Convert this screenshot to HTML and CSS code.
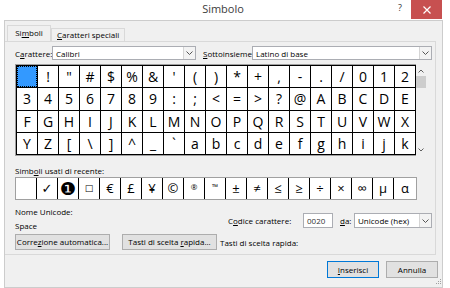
FILE: index.html
```html
<!DOCTYPE html>
<html lang="it">
  <head>
    <title>Simbolo</title>
    <meta name="viewport" content="width=device-width, initial-scale=1.0">
    <link rel="stylesheet" href="styles.css">
  </head>
  <body>
    <div class="titlebar">
      <div class="title">Simbolo</div>
      <div class="help">?</div>
      <div class="close">
        <svg width="8" height="8" viewBox="0 0 8 8"><path d="M0.5 0.5 L7.5 7.5 M7.5 0.5 L0.5 7.5" stroke="#fff" stroke-width="1.2"/></svg>
      </div>
    </div>
    <div class="client">
      <div class="tabs">
        <div class="tab active">Si<u>m</u>boli</div>
        <div class="tab"><u>C</u>aratteri speciali</div>
      </div>
      <div class="panel">
        <div class="font-row">
          <span class="lbl lbl-font">C<u>a</u>rattere:</span>
          <div class="select sel-font"><span>Calibri</span><span class="arrow"><svg width="7" height="4" viewBox="0 0 7 4"><path d="M0.5 0.5 L3.5 3.5 L6.5 0.5" fill="none" stroke="#555"/></svg></span></div>
          <span class="lbl lbl-sub"><u>S</u>ottoinsieme:</span>
          <div class="select sel-sub"><span>Latino di base</span><span class="arrow"><svg width="7" height="4" viewBox="0 0 7 4"><path d="M0.5 0.5 L3.5 3.5 L6.5 0.5" fill="none" stroke="#555"/></svg></span></div>
        </div>
        <div class="charbox">
          <div class="grid">
            <div class="cell sel"></div><div class="cell">!</div><div class="cell">"</div><div class="cell">#</div><div class="cell">$</div><div class="cell">%</div><div class="cell">&amp;</div><div class="cell">'</div><div class="cell">(</div><div class="cell">)</div><div class="cell">*</div><div class="cell">+</div><div class="cell">,</div><div class="cell">-</div><div class="cell">.</div><div class="cell">/</div><div class="cell">0</div><div class="cell">1</div><div class="cell">2</div>
            <div class="cell">3</div><div class="cell">4</div><div class="cell">5</div><div class="cell">6</div><div class="cell">7</div><div class="cell">8</div><div class="cell">9</div><div class="cell">:</div><div class="cell">;</div><div class="cell">&lt;</div><div class="cell">=</div><div class="cell">&gt;</div><div class="cell">?</div><div class="cell">@</div><div class="cell">A</div><div class="cell">B</div><div class="cell">C</div><div class="cell">D</div><div class="cell">E</div>
            <div class="cell">F</div><div class="cell">G</div><div class="cell">H</div><div class="cell">I</div><div class="cell">J</div><div class="cell">K</div><div class="cell">L</div><div class="cell">M</div><div class="cell">N</div><div class="cell">O</div><div class="cell">P</div><div class="cell">Q</div><div class="cell">R</div><div class="cell">S</div><div class="cell">T</div><div class="cell">U</div><div class="cell">V</div><div class="cell">W</div><div class="cell">X</div>
            <div class="cell">Y</div><div class="cell">Z</div><div class="cell">[</div><div class="cell">\</div><div class="cell">]</div><div class="cell">^</div><div class="cell">_</div><div class="cell">`</div><div class="cell">a</div><div class="cell">b</div><div class="cell">c</div><div class="cell">d</div><div class="cell">e</div><div class="cell">f</div><div class="cell">g</div><div class="cell">h</div><div class="cell">i</div><div class="cell">j</div><div class="cell">k</div>
          </div>
          <div class="scrollbar">
            <div class="sb-btn"><svg width="6" height="4" viewBox="0 0 6 4"><path d="M0.5 3.5 L3 1 L5.5 3.5" fill="none" stroke="#606060"/></svg></div>
            <div class="sb-thumb"></div>
            <div class="sb-track"></div>
            <div class="sb-btn"><svg width="6" height="4" viewBox="0 0 6 4"><path d="M0.5 0.5 L3 3 L5.5 0.5" fill="none" stroke="#606060"/></svg></div>
          </div>
        </div>
        <div class="recent-label">Simb<u>o</u>li usati di recente:</div>
        <div class="recent">
          <div class="rcell"></div><div class="rcell">✓</div><div class="rcell dingbat">❶</div><div class="rcell small">□</div><div class="rcell">€</div><div class="rcell">£</div><div class="rcell">¥</div><div class="rcell">©</div><div class="rcell tiny">®</div><div class="rcell tiny">™</div><div class="rcell">±</div><div class="rcell">≠</div><div class="rcell">≤</div><div class="rcell">≥</div><div class="rcell">÷</div><div class="rcell">×</div><div class="rcell">∞</div><div class="rcell">µ</div><div class="rcell">α</div>
        </div>
        <div class="info">
          <div class="names">
            <div>Nome Unicode:</div>
            <div>Space</div>
          </div>
          <div class="code">
            <span class="lbl lbl-code">C<u>o</u>dice carattere:</span>
            <div class="input">0020</div>
            <span class="lbl lbl-da"><u>d</u>a:</span>
            <div class="select sel-da"><span>Unicode (hex)</span><span class="arrow"><svg width="7" height="4" viewBox="0 0 7 4"><path d="M0.5 0.5 L3.5 3.5 L6.5 0.5" fill="none" stroke="#555"/></svg></span></div>
          </div>
        </div>
        <div class="btn-row">
          <div class="btn">Corre<u>z</u>ione automatica...</div>
          <div class="btn btn-keys">Tasti di scelta <u>r</u>apida...</div>
          <span class="keys-label">Tasti di scelta rapida:</span>
        </div>
      </div>
      <div class="actions">
        <div class="btn btn-dlg default"><u>I</u>nserisci</div>
        <div class="btn btn-dlg">Annulla</div>
      </div>
      <svg class="grip" width="7" height="7" viewBox="0 0 7 7">
        <rect x="5" y="1" width="1" height="1" fill="#a0a0a0"/>
        <rect x="3" y="3" width="1" height="1" fill="#a0a0a0"/>
        <rect x="5" y="3" width="1" height="1" fill="#a0a0a0"/>
        <rect x="1" y="5" width="1" height="1" fill="#a0a0a0"/>
        <rect x="3" y="5" width="1" height="1" fill="#a0a0a0"/>
        <rect x="5" y="5" width="1" height="1" fill="#a0a0a0"/>
      </svg>
    </div>
  </body>
</html>
```

FILE: styles.css
```css
body {
  margin: 0;
  width: 450px;
  height: 288px;
  overflow: hidden;
  background: #fff;
  font-family: "Open Sans", "Noto Sans", sans-serif;
  font-size: 8px;
  color: #000;
}
u {
  text-decoration: underline;
}

/* title bar */
.titlebar {
  display: flex;
  height: 20px;
}
.title {
  flex: 1;
  padding-left: 52px;
  text-align: center;
  font-size: 11px;
  line-height: 18px;
  color: #3c3c3c;
}
.help {
  width: 12px;
  margin-right: 5px;
  text-align: center;
  font-size: 9px;
  line-height: 15px;
  color: #333;
}
.close {
  width: 31px;
  height: 19px;
  margin-right: 8px;
  background: #c75050;
  display: flex;
  align-items: center;
  justify-content: center;
}

/* dialog body */
.client {
  position: relative;
  box-sizing: border-box;
  width: 439px;
  height: 268px;
  margin-left: 4px;
  border: 1px solid #cccccc;
  background: #f0f0f0;
}
.tabs {
  display: flex;
  align-items: flex-end;
  height: 20px;
  padding-left: 2px;
}
.tab {
  box-sizing: border-box;
  height: 13px;
  padding: 0 5px;
  border: 1px solid #d9d9d9;
  border-bottom: 0;
  line-height: 12px;
  background: #f0f0f0;
}
.tab.active {
  width: 44px;
  height: 16px;
  line-height: 14px;
  text-align: center;
}
.panel {
  box-sizing: border-box;
  height: 214px;
  margin-right: 6px;
  padding: 4px 3px 0 10px;
  border: 1px solid #d9d9d9;
  border-left: 0;
}

/* font row */
.font-row {
  display: flex;
  align-items: center;
  height: 14px;
}
.lbl {
  white-space: nowrap;
}
.lbl-font {
  width: 37px;
}
.lbl-sub {
  width: 49px;
  margin-left: 7px;
}
.select {
  box-sizing: border-box;
  display: flex;
  align-items: center;
  height: 14px;
  padding-left: 3px;
  border: 1px solid #abadb3;
  background: #fff;
}
.sel-font {
  width: 144px;
}
.sel-sub {
  width: 180px;
}
.arrow {
  margin-left: auto;
  width: 11px;
  height: 12px;
  border-left: 1px solid #d5d5d5;
  background: #f3f3f3;
  display: flex;
  align-items: center;
  justify-content: center;
}

/* character grid */
.charbox {
  display: flex;
  margin-top: 4px;
}
.grid {
  display: grid;
  grid-template-columns: repeat(19, 20px);
  grid-template-rows: 21px 22px 21px 21px;
  gap: 1px;
  padding: 1px;
  background: #000;
  border: 1px solid #a0a0a0;
  border-right: 0;
}
.cell {
  background: #fff;
  display: flex;
  align-items: center;
  justify-content: center;
  font-size: 14px;
  line-height: 1;
}
.cell.sel {
  background: #3399ff;
  outline: 1px dotted #000;
  outline-offset: -1px;
}
.scrollbar {
  display: flex;
  flex-direction: column;
  width: 10px;
  padding: 1px 0;
  background: #f0f0f0;
}
.sb-btn {
  height: 11px;
  display: flex;
  align-items: center;
  justify-content: center;
}
.sb-thumb {
  height: 12px;
  background: #cdcdcd;
}
.sb-track {
  flex: 1;
}

/* recent symbols */
.recent-label {
  margin-top: 9px;
  line-height: 12px;
}
.recent {
  display: flex;
  width: 402px;
  box-sizing: border-box;
  border: 1px solid #a0a0a0;
  background: #fff;
}
.rcell {
  box-sizing: border-box;
  width: 21px;
  height: 21px;
  border-right: 1px solid #000;
  display: flex;
  align-items: center;
  justify-content: center;
  font-family: "Open Sans", "DejaVu Sans", sans-serif;
  font-size: 13px;
  line-height: 1;
}
.rcell:last-child {
  flex: 1;
  border-right: 0;
}
.rcell.dingbat {
  font-family: "DejaVu Sans", sans-serif;
  font-size: 18px;
}
.rcell.small {
  font-family: "DejaVu Sans", sans-serif;
  font-size: 9px;
}
.rcell.tiny {
  font-size: 8px;
  padding-bottom: 4px;
}

/* unicode info */
.info {
  display: flex;
  justify-content: space-between;
  margin-top: 6px;
}
.names {
  display: flex;
  flex-direction: column;
  gap: 2px;
  line-height: 12px;
}
.code {
  display: flex;
  align-items: center;
  height: 15px;
  margin-top: 7px;
}
.lbl-code {
  width: 75px;
}
.input {
  box-sizing: border-box;
  width: 30px;
  height: 15px;
  padding-left: 3px;
  border: 1px solid #abadb3;
  background: #fff;
  line-height: 13px;
  color: #333;
}
.lbl-da {
  width: 14px;
  margin-left: 7px;
}
.sel-da {
  width: 78px;
  height: 15px;
}
.sel-da .arrow {
  height: 13px;
}

/* buttons */
.btn-row {
  display: flex;
  align-items: center;
  margin-top: 2px;
}
.btn {
  box-sizing: border-box;
  width: 95px;
  height: 16px;
  border: 1px solid #adadad;
  background: #e1e1e1;
  text-align: center;
  line-height: 14px;
}
.btn-keys {
  margin-left: 12px;
}
.keys-label {
  margin-left: 3px;
}
.actions {
  display: flex;
  justify-content: flex-end;
  gap: 7px;
  margin-top: 6px;
  padding-right: 4px;
}
.btn-dlg {
  width: 52px;
  height: 17px;
  line-height: 15px;
}
.btn-dlg.default {
  border-color: #0078d7;
}
.grip {
  position: absolute;
  right: 0;
  bottom: 2px;
}
```
